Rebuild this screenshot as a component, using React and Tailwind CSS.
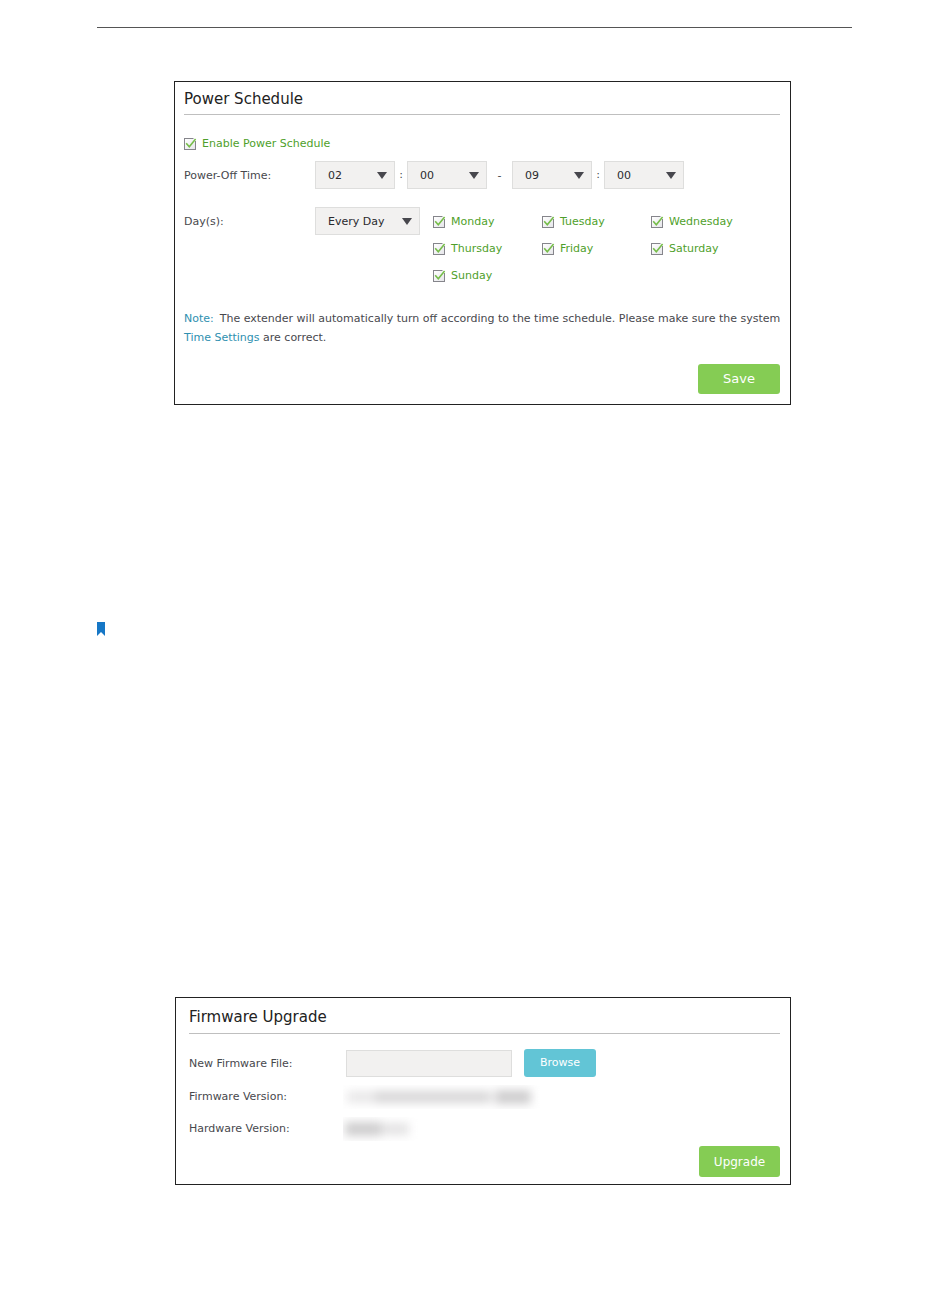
import { useState } from "react";

const DAYS = ["Monday", "Tuesday", "Wednesday", "Thursday", "Friday", "Saturday", "Sunday"];
const HOURS = Array.from({ length: 24 }, (_, i) => String(i).padStart(2, "0"));
const MINUTES = Array.from({ length: 60 }, (_, i) => String(i).padStart(2, "0"));

function CheckBox({ label, checked, onChange }) {
  return (
    <label className="flex w-fit items-center gap-1.5 text-[#4f9f2b]">
      <span className="grid">
        <input
          type="checkbox"
          checked={checked}
          onChange={onChange}
          className="col-start-1 row-start-1 size-3 appearance-none border border-[#85858b] bg-linear-to-br from-white to-[#e6e6ea]"
        />
        <svg viewBox="0 0 12 12" className="pointer-events-none col-start-1 row-start-1 size-3 overflow-visible" aria-hidden="true">
          {checked && (
            <>
              <path d="M9.5 0.5H11.5V3" fill="none" stroke="#fff" strokeWidth="1.2" />
              <path d="M2.2 5.2 5.3 8.8 11.6 1" fill="none" stroke="#76bd4a" strokeWidth="1.6" />
            </>
          )}
        </svg>
      </span>
      {label}
    </label>
  );
}

function Select({ label, options, initial, className }) {
  const [value, setValue] = useState(initial);
  return (
    <span className={`grid items-center ${className}`}>
      <select
        aria-label={label}
        value={value}
        onChange={(e) => setValue(e.target.value)}
        className="col-start-1 row-start-1 h-7 w-full appearance-none border border-[#dededd] bg-[#f2f1f0] px-3 pt-0.5 leading-4 text-[#2a2a2e]"
      >
        {options.map((o) => (
          <option key={o}>{o}</option>
        ))}
      </select>
      <svg viewBox="0 0 10 7" className="pointer-events-none col-start-1 row-start-1 mr-2 h-[7px] w-2.5 justify-self-end" aria-hidden="true">
        <path d="M0 0H10L5 7Z" fill="#47474d" />
      </svg>
    </span>
  );
}

function PowerSchedule() {
  const [enabled, setEnabled] = useState(true);
  const [days, setDays] = useState(DAYS);
  const toggle = (day) => setDays((d) => (d.includes(day) ? d.filter((x) => x !== day) : [...d, day]));
  return (
    <section className="mr-[62px] ml-[77px] border border-[#222] pt-1.5 pr-2.5 pb-2.5 pl-[9px]">
      <h2 className="border-b border-[#bfbfbf] pb-1 text-[15px] leading-[22px] text-[#222]">Power Schedule</h2>
      <div className="mt-5 leading-[18px]">
        <CheckBox label="Enable Power Schedule" checked={enabled} onChange={() => setEnabled(!enabled)} />
      </div>
      <div className="mt-2 flex items-center">
        <span className="w-[131px] pt-0.5">Power-Off Time:</span>
        <Select label="Start hour" options={HOURS} initial="02" className="w-20" />
        <span className="w-3 text-center">:</span>
        <Select label="Start minute" options={MINUTES} initial="00" className="w-20" />
        <span className="w-[25px] pt-0.5 text-center">-</span>
        <Select label="End hour" options={HOURS} initial="09" className="w-20" />
        <span className="w-3 text-center">:</span>
        <Select label="End minute" options={MINUTES} initial="00" className="w-20" />
      </div>
      <div className="mt-[18px] flex items-start leading-[27px]">
        <span className="w-[131px] pt-px">Day(s):</span>
        <Select label="Days" options={["Every Day", "Custom"]} initial="Every Day" className="w-[105px]" />
        <div className="ml-[13px] grid grid-cols-[repeat(3,109px)] pt-px">
          {DAYS.map((day) => (
            <CheckBox key={day} label={day} checked={days.includes(day)} onChange={() => toggle(day)} />
          ))}
        </div>
      </div>
      <p className="mt-5 -mr-1 leading-[19px]">
        <span className="mr-1.5 text-[#2f90b0]">Note:</span>
        The extender will automatically turn off according to the time schedule. Please make sure the system{" "}
        <a href="#time-settings" className="text-[#2f90b0]">Time Settings</a> are correct.
      </p>
      <div className="mt-[17px] flex justify-end">
        <button type="button" className="h-[30px] w-[82px] rounded-[3px] bg-[#85cc54] text-[13px] text-white">Save</button>
      </div>
    </section>
  );
}

function FirmwareUpgrade() {
  return (
    <section className="mt-[361px] mr-[62px] ml-[78px] border border-[#222] pt-2 pr-2.5 pb-[7px] pl-[13px]">
      <h2 className="border-b border-[#bfbfbf] pb-[5px] text-[15px] leading-[22px] text-[#222]">Firmware Upgrade</h2>
      <div className="mt-[15px] flex h-7 items-center">
        <label htmlFor="firmware-file" className="w-[157px] pt-0.5">New Firmware File:</label>
        <input id="firmware-file" type="text" className="h-[27px] w-[166px] border border-[#dededd] bg-[#f2f1f0] px-2" />
        <button type="button" className="ml-3 h-7 w-[72px] rounded-[3px] bg-[#62c5d6] text-white">Browse</button>
      </div>
      <dl className="mt-1 grid grid-cols-[154px_1fr] leading-8">
        <dt>Firmware Version:</dt>
        <dd className="flex items-center">
          <div className="h-6 w-[206px] overflow-hidden">
            <div className="flex h-6 items-center pl-1 blur-[5px]">
              <span className="h-3 w-7 bg-[#e9e8e9]" />
              <span className="h-3 w-[116px] bg-[#d8d7d8]" />
              <span className="ml-1 h-3.5 w-9 bg-[#cfcecf]" />
            </div>
          </div>
        </dd>
        <dt>Hardware Version:</dt>
        <dd className="flex items-center">
          <div className="h-6 w-20 overflow-hidden">
            <div className="flex h-6 items-center pl-0.5 blur-[5px]">
              <span className="h-3.5 w-9 bg-[#cfcecf]" />
              <span className="h-3 w-7 bg-[#e4e3e4]" />
            </div>
          </div>
        </dd>
      </dl>
      <div className="mt-px flex justify-end">
        <button type="button" className="h-[31px] w-[81px] rounded-[3px] bg-[#85cc54] text-[12px] text-white">Upgrade</button>
      </div>
    </section>
  );
}

export default function App() {
  return (
    <main className="bg-white px-[97px] pt-[27px] pb-[105px] font-['DejaVu_Sans',sans-serif] text-[11px] text-[#48484d]">
      <hr className="mr-px mb-[53px] border-[#555]" />
      <PowerSchedule />
      <svg viewBox="0 0 8 14" className="mt-[217px] h-3.5 w-2" role="img" aria-label="Bookmark">
        <path d="M0 0H8V14L4 10 0 14Z" fill="#1677c6" />
      </svg>
      <FirmwareUpgrade />
    </main>
  );
}
